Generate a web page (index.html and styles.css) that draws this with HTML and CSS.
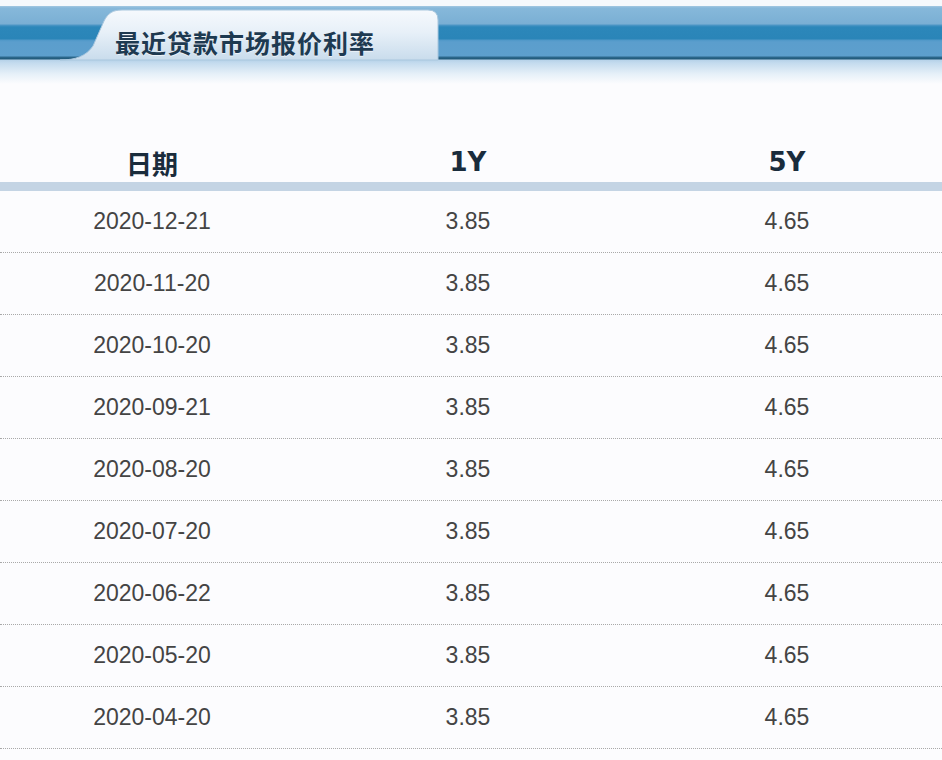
FILE: index.html
```html
<!DOCTYPE html>
<html lang="zh-CN">
<head>
<meta charset="utf-8">
<title>最近贷款市场报价利率</title>
<link rel="stylesheet" href="styles.css">
</head>
<body>
<div class="banner">
  <svg class="tab-shape" width="942" height="84" viewBox="0 0 942 84" aria-hidden="true">
    <defs>
      <linearGradient id="tabfill" x1="0" y1="0" x2="0" y2="1">
        <stop offset="0" stop-color="#f6f9fd"/>
        <stop offset="0.45" stop-color="#e7f0f8"/>
        <stop offset="1" stop-color="#c9dcec"/>
      </linearGradient>
    </defs>
    <path d="M 60 60 C 76 60, 86 56, 93 46 L 104 21 C 108 13, 113 10, 122 10 L 428 10 Q 438 10 438 20 L 438 60 Z" fill="url(#tabfill)" stroke="#a9c7de" stroke-width="1"/>
  </svg>
  <h1 class="title">最近贷款市场报价利率</h1>
</div>
<div class="table">
  <div class="row head">
    <div class="cell cjk">日期</div>
    <div class="cell">1Y</div>
    <div class="cell">5Y</div>
  </div>
  <div class="row"><div class="cell">2020-12-21</div><div class="cell">3.85</div><div class="cell">4.65</div></div>
  <div class="row"><div class="cell">2020-11-20</div><div class="cell">3.85</div><div class="cell">4.65</div></div>
  <div class="row"><div class="cell">2020-10-20</div><div class="cell">3.85</div><div class="cell">4.65</div></div>
  <div class="row"><div class="cell">2020-09-21</div><div class="cell">3.85</div><div class="cell">4.65</div></div>
  <div class="row"><div class="cell">2020-08-20</div><div class="cell">3.85</div><div class="cell">4.65</div></div>
  <div class="row"><div class="cell">2020-07-20</div><div class="cell">3.85</div><div class="cell">4.65</div></div>
  <div class="row"><div class="cell">2020-06-22</div><div class="cell">3.85</div><div class="cell">4.65</div></div>
  <div class="row"><div class="cell">2020-05-20</div><div class="cell">3.85</div><div class="cell">4.65</div></div>
  <div class="row"><div class="cell">2020-04-20</div><div class="cell">3.85</div><div class="cell">4.65</div></div>
</div>
</body>
</html>
```
FILE: styles.css
```css
html, body {
  margin: 0;
  padding: 0;
  overflow: hidden;
}
body {
  width: 942px;
  height: 760px;
  background: #fcfcfe;
  font-family: "Liberation Sans", Arial, "Noto Sans CJK SC", sans-serif;
}
.banner {
  position: relative;
  height: 84px;
  display: flex;
  align-items: flex-start;
  background: linear-gradient(to bottom,
    #f6f9fc 0px, #f6f9fc 6px,
    #a4c8e1 6px, #86b8da 8px, #7aafd4 24px,
    #4f97c6 25px, #2c87ba 27px, #2a85b8 39px,
    #4f98c8 40px, #5b9ecd 42px, #5d9fcd 56px,
    #2e6a8f 57px, #1f5878 59px,
    #b6d2e9 60px, #c4dbee 63px, #e6f0f8 74px, #fcfcfe 84px);
}
.tab-shape {
  position: absolute;
  left: 0;
  top: 0;
}
.title {
  position: relative;
  margin: 0;
  padding: 25px 0 0 115px;
  font-family: "Noto Sans CJK SC", sans-serif;
  font-weight: 700;
  font-size: 25px;
  line-height: 34px;
  letter-spacing: 1px;
  color: #1e3a51;
  text-shadow: 0 1px 0 rgba(255,255,255,0.6);
}
.table {
  margin-top: 58px;
}
.row {
  display: grid;
  grid-template-columns: 304px 328px 1fr;
  height: 61px;
  border-bottom: 1px dotted #a9a9a9;
  align-items: center;
  font-size: 23px;
  color: #444444;
}
.row.head {
  height: 40px;
  border-bottom: 9px solid #c4d4e4;
  font-family: "DejaVu Sans", "Noto Sans CJK SC", sans-serif;
  font-weight: 700;
  font-size: 26px;
  color: #1a2c3c;
}
.cell {
  text-align: center;
}
.head .cjk {
  font-family: "Noto Sans CJK SC", sans-serif;
  font-size: 26px;
}
```
